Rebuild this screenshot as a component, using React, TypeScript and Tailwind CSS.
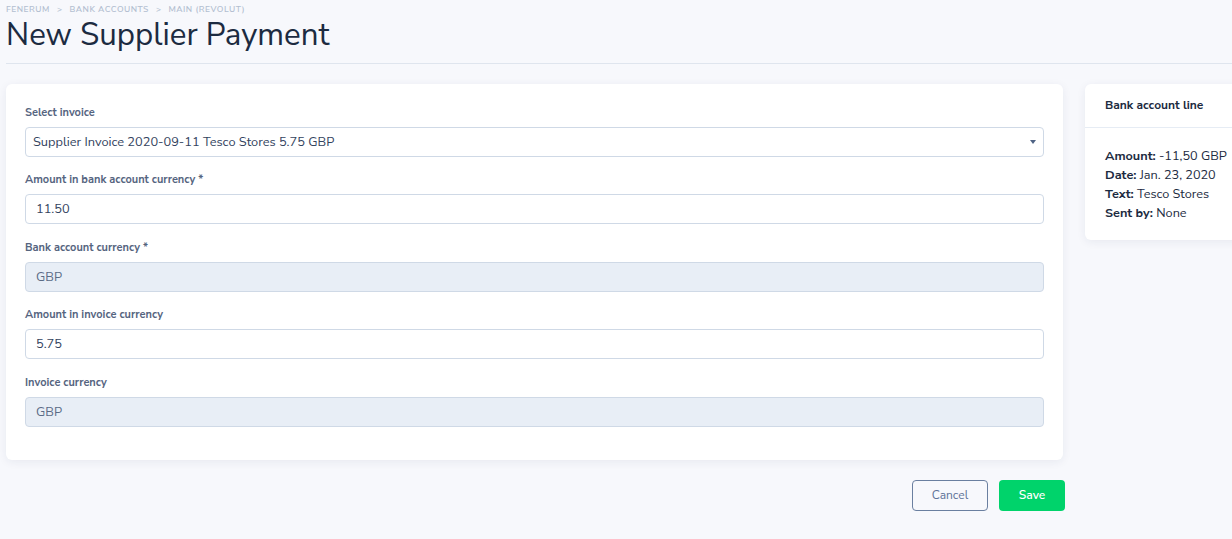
import React from 'react';

const font = { fontFamily: '"Nunito Sans", Lato, "Open Sans", sans-serif' };

type Field = { label: string; value: string; kind: 'select' | 'input' | 'readonly' };

const fields: Field[] = [
  { label: 'Select invoice', value: 'Supplier Invoice 2020-09-11 Tesco Stores 5.75 GBP', kind: 'select' },
  { label: 'Amount in bank account currency *', value: '11.50', kind: 'input' },
  { label: 'Bank account currency *', value: 'GBP', kind: 'readonly' },
  { label: 'Amount in invoice currency', value: '5.75', kind: 'input' },
  { label: 'Invoice currency', value: 'GBP', kind: 'readonly' },
];

function FormField({ field }: { field: Field }) {
  const box =
    field.kind === 'readonly'
      ? 'bg-[#e8eef6] border-[#cfd9e6]'
      : 'bg-white border-[#cfd9e6]';
  return (
    <div className="flex flex-col">
      <label className="text-[11px] font-bold text-[#56657f] leading-[15px] mb-[7px]">{field.label}</label>
      <div className={`h-[30px] border rounded-[4px] flex items-center justify-between pl-[7px] pr-[7px] ${box}`}>
        <span className={`text-[12.8px] pt-[1px] ${field.kind === 'readonly' ? 'pl-[3px] text-[#5b6b86]' : field.kind === 'input' ? 'pl-[3px] text-[#33435e]' : 'text-[#33435e]'}`}>
          {field.value}
        </span>
        {field.kind === 'select' && (
          <svg width="6" height="4" viewBox="0 0 6 4">
            <path d="M0 0h6L3 4z" fill="#4f6384" />
          </svg>
        )}
      </div>
    </div>
  );
}

export default function App() {
  return (
    <div className="w-[1232px] h-[539px] bg-[#f7f8fc] overflow-hidden text-[#1b2a40]" style={font}>
      <div className="pl-[6px]">
        <div className="pt-[3px] text-[8.5px] font-semibold tracking-[0.06em] text-[#b3bfd1] uppercase flex gap-[7px]">
          <span>Fenerum</span>
          <span>&gt;</span>
          <span>Bank accounts</span>
          <span>&gt;</span>
          <span>Main (Revolut)</span>
        </div>
        <h1 className="text-[31.3px] leading-[36px] font-normal text-[#1c2b41] mt-[1px]">New Supplier Payment</h1>
        <div className="mt-[10px] h-px bg-[#dfe5ee]" />
      </div>

      <div className="flex items-start gap-[22px] pl-[6px] mt-[20px]">
        <div className="flex flex-col w-[1057px] shrink-0">
          <div className="w-[1057px] bg-white rounded-[6px] shadow-[0_2px_10px_rgba(30,45,80,0.07)] px-[19px] pt-[21px] pb-[33px] flex flex-col gap-[15.5px]">
            {fields.map((f) => (
              <FormField key={f.label} field={f} />
            ))}
          </div>
          <div className="flex justify-end gap-[11px] mt-[20px] -mr-[2px]">
            <button className="w-[76px] h-[31px] border border-[#6a7fa0] rounded-[4px] text-[12px] text-[#5e7398] bg-transparent">
              Cancel
            </button>
            <button className="w-[66px] h-[31px] rounded-[4px] text-[12px] font-semibold text-white bg-[#00d36b]">
              Save
            </button>
          </div>
        </div>

        <div className="w-[180px] shrink-0 bg-white rounded-[6px] shadow-[0_2px_10px_rgba(30,45,80,0.07)]">
          <div className="px-[20px] pt-[12px] pb-[13px] text-[12px] font-bold text-[#1c2b41] border-b border-[#e6ecf4]">
            Bank account line
          </div>
          <div className="px-[20px] pt-[18px] pb-[18px] text-[12.7px] leading-[19px] text-[#1c2b41] whitespace-nowrap">
            <div><b>Amount:</b> -11,50 GBP</div>
            <div><b>Date:</b> Jan. 23, 2020</div>
            <div><b>Text:</b> Tesco Stores</div>
            <div><b>Sent by:</b> None</div>
          </div>
        </div>
      </div>
    </div>
  );
}
